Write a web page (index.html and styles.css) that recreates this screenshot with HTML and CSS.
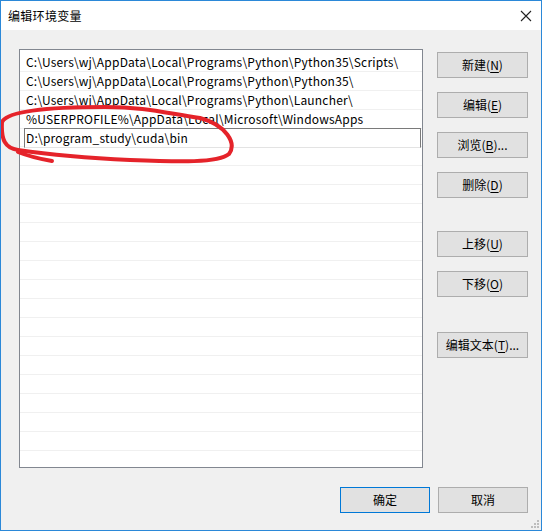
FILE: index.html
```html
<!DOCTYPE html>
<html lang="zh-CN">
<head>
<meta charset="utf-8">
<title>编辑环境变量</title>
<link rel="stylesheet" href="styles.css">
</head>
<body>
<div class="window">
  <div class="titlebar">
    <span class="title">编辑环境变量</span>
    <svg class="close" width="12" height="12" viewBox="0 0 12 12"><path d="M1 1L11 11M11 1L1 11" stroke="#222" stroke-width="1.1" fill="none"/></svg>
  </div>
  <div class="client">
    <div class="main">
      <div class="list">
        <div class="row">C:\Users\wj\AppData\Local\Programs\Python\Python35\Scripts\</div>
        <div class="row">C:\Users\wj\AppData\Local\Programs\Python\Python35\</div>
        <div class="row">C:\Users\wj\AppData\Local\Programs\Python\Launcher\</div>
        <div class="row">%USERPROFILE%\AppData\Local\Microsoft\WindowsApps</div>
        <div class="row editing"><span class="editbox">D:\program_study\cuda\bin</span></div>
        <div class="row"></div><div class="row"></div><div class="row"></div><div class="row"></div>
        <div class="row"></div><div class="row"></div><div class="row"></div><div class="row"></div>
        <div class="row"></div><div class="row"></div><div class="row"></div><div class="row"></div>
        <div class="row"></div><div class="row"></div><div class="row"></div><div class="row"></div>
        <div class="row"></div>
      </div>
      <div class="side">
        <div class="group">
          <button class="btn">新建(<u>N</u>)</button>
          <button class="btn">编辑(<u>E</u>)</button>
          <button class="btn">浏览(<u>B</u>)...</button>
          <button class="btn">删除(<u>D</u>)</button>
        </div>
        <div class="group move">
          <button class="btn">上移(<u>U</u>)</button>
          <button class="btn">下移(<u>O</u>)</button>
        </div>
        <div class="group text">
          <button class="btn">编辑文本(<u>T</u>)...</button>
        </div>
      </div>
    </div>
    <div class="footer">
      <button class="btn default">确定</button>
      <button class="btn">取消</button>
    </div>
    <svg class="grip" width="8" height="8" viewBox="0 0 8 8">
      <rect x="6" y="0" width="2" height="2" fill="#bdbdbd"/>
      <rect x="3" y="3" width="2" height="2" fill="#bdbdbd"/>
      <rect x="6" y="3" width="2" height="2" fill="#bdbdbd"/>
      <rect x="0" y="6" width="2" height="2" fill="#bdbdbd"/>
      <rect x="3" y="6" width="2" height="2" fill="#bdbdbd"/>
      <rect x="6" y="6" width="2" height="2" fill="#bdbdbd"/>
    </svg>
  </div>
  <svg class="mark" width="542" height="531" viewBox="0 0 542 531">
    <path d="M 2 122 C 8 110, 55 107, 105 107 C 145 107, 165 113, 200 118 C 226 125, 237 143, 229 154 C 218 163, 180 162, 130 160 C 85 158, 45 154, 18 150 C 5 148, 1 140, 2 122" fill="none" stroke="#e5232a" stroke-width="4" stroke-linecap="round"/>
    <path d="M 18 152 C 28 156, 40 159, 52 161" fill="none" stroke="#e5232a" stroke-width="4" stroke-linecap="round"/>
  </svg>
</div>
</body>
</html>
```
FILE: styles.css
```css
* { box-sizing: border-box; }
html, body { margin: 0; padding: 0; background: #fff; }
body {
  font-family: "Noto Sans CJK SC", "Noto Sans", sans-serif;
  font-size: 12px;
  color: #000;
}
.window {
  position: relative;
  width: 542px;
  height: 531px;
  border: 1px solid #2b88d8;
  display: flex;
  flex-direction: column;
  overflow: hidden;
}
.titlebar {
  height: 29px;
  background: #fff;
  display: flex;
  align-items: center;
  justify-content: space-between;
  padding: 0 9px 0 7px;
  flex: none;
}
.title { font-size: 12px; line-height: 16px; color: #000; letter-spacing: 0.3px; }
.close { display: block; }
.client {
  position: relative;
  flex: 1;
  background: #f0f0f0;
  padding: 19px 13px 0 18px;
  display: flex;
  flex-direction: column;
}
.main {
  display: flex;
  gap: 14px;
}
.list {
  width: 404px;
  height: 419px;
  border: 1px solid #828790;
  background: #fff;
  padding-top: 3px;
  overflow: hidden;
}
.row {
  height: 19px;
  border-bottom: 1px solid #f0f0f0;
  padding-left: 6px;
  line-height: 18px;
  white-space: nowrap;
  font-size: 12px;
  letter-spacing: 0.2px;
}
.row.editing {
  padding-left: 4px;
  padding-right: 1px;
}
.editbox {
  display: block;
  height: 20px;
  margin-top: -1px;
  border: 1px solid #7a7a7a;
  border-bottom-color: #e3e3e3;
  padding-left: 1px;
  line-height: 18px;
  background: #fff;
}
.side {
  width: 91px;
  padding-top: 3px;
  display: flex;
  flex-direction: column;
}
.group {
  display: flex;
  flex-direction: column;
  gap: 14px;
}
.group.move { margin-top: 33px; }
.group.text { margin-top: 35px; }
.btn {
  width: 91px;
  height: 26px;
  border: 1px solid #adadad;
  background: #e1e1e1;
  font-family: "Noto Sans CJK SC", "Noto Sans", sans-serif;
  font-size: 12px;
  color: #000;
  padding: 0;
  line-height: 22px;
}
.btn u { text-decoration-thickness: 1px; text-underline-offset: 2px; }
.footer {
  display: flex;
  justify-content: flex-end;
  gap: 8px;
  margin-top: 19px;
}
.footer .btn { width: 90px; }
.btn.default { border-color: #0078d7; }
.grip {
  position: absolute;
  right: 2px;
  bottom: 2px;
}
.mark {
  position: absolute;
  left: -1px;
  top: -1px;
  pointer-events: none;
}
```
